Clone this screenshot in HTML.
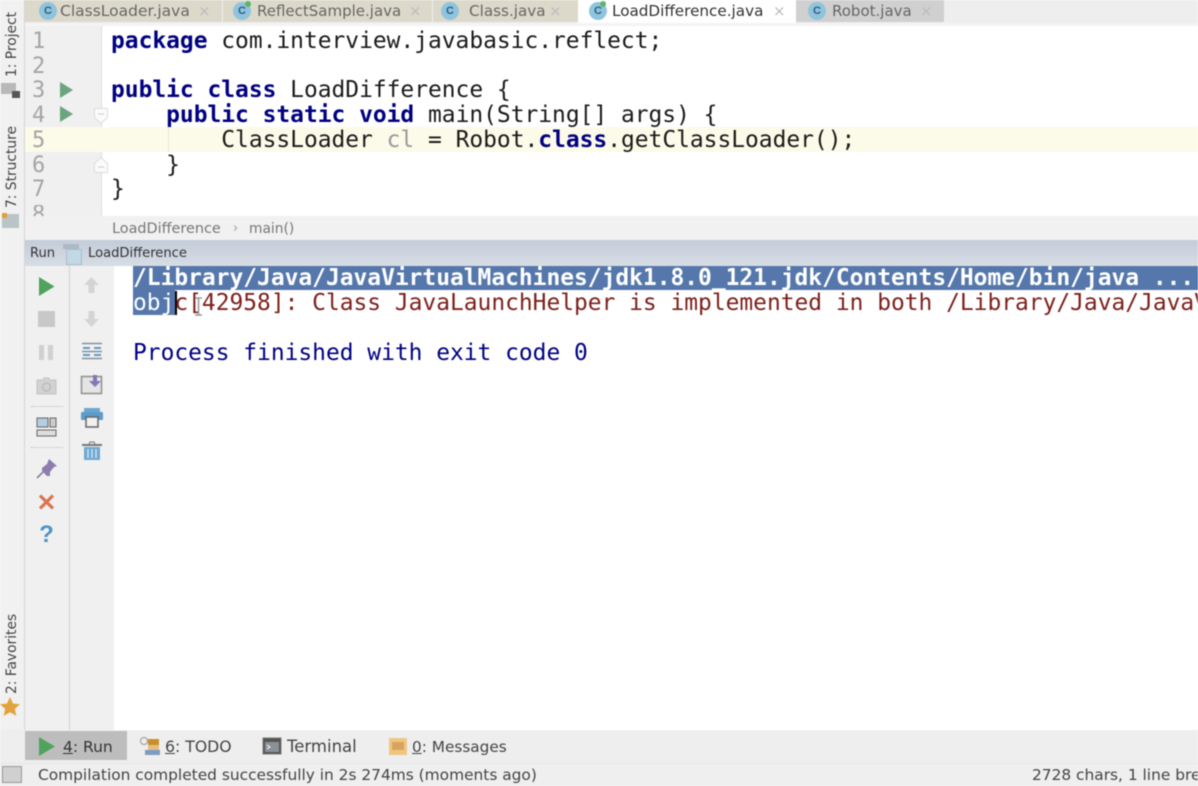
<!DOCTYPE html>
<html><head><meta charset="utf-8">
<style>
html,body{margin:0;padding:0;background:#fff}
#r{position:relative;width:1198px;height:786px;overflow:hidden;background:#fff;font-family:"DejaVu Sans",sans-serif;filter:blur(.6px)}
.a{position:absolute}
.m{position:absolute;font-family:"DejaVu Sans Mono",monospace;font-size:22.9px;line-height:25px;white-space:pre;color:#1a1a1a}
.k{color:#000080;font-weight:bold}
.n{position:absolute;left:32px;font-family:"DejaVu Sans Mono",monospace;font-size:22px;line-height:25px;color:#a4a4a4}
.t{position:absolute;top:1px;height:22px;line-height:21px;font-size:15.2px;color:#666;white-space:nowrap}
.x{position:absolute;top:0;font-size:15px;line-height:22px;color:#bbb}
.c{position:absolute;top:2px;width:18px;height:18px;border-radius:50%;background:#8fc4dc;color:#2f5f80;font:bold 11px/18px "Liberation Sans",sans-serif;text-align:center}
.g{position:absolute;top:1px;width:6px;height:6px;background:#5fb36a;border-radius:50%}
.v{position:absolute;transform:rotate(-90deg);transform-origin:0 0;font-size:13.8px;line-height:18px;color:#444;white-space:nowrap}
.b{position:absolute;font-size:15.500px;line-height:20px;color:#444;white-space:nowrap}
u{text-decoration:underline}
svg{position:absolute;overflow:visible}
</style></head><body><div id="r">

<!-- left stripe -->
<div class="a" style="left:0;top:0;width:24px;height:730px;background:#f1f1f1;border-right:1px solid #d4d4d4"></div>
<div class="v" style="left:3px;top:77px">1: Project</div>
<div class="a" style="left:1px;top:83px;width:15px;height:11px;background:#b8b8b8"></div>
<div class="a" style="left:12px;top:91px;width:8px;height:7px;background:#555"></div>
<div class="v" style="left:3px;top:208px">7: Structure</div>
<div class="a" style="left:2px;top:214px;width:17px;height:14px;background:#b8c4c8"></div>
<div class="a" style="left:2px;top:213px;width:5px;height:5px;background:#e0a030"></div>
<div class="v" style="left:3px;top:694px">2: Favorites</div>
<svg style="left:0;top:697px" width="21" height="21" viewBox="0 0 21 21"><path d="M10 0l3 6.500 7 .8-5.200 4.600 1.500 7L10 15.300l-6.300 3.600 1.500-7L0 7.300l7-.8z" fill="#e3a33c"/></svg>

<!-- tab bar -->
<div class="a" style="left:25px;top:0;width:1173px;height:23px;background:#eeeeee"></div>
<div class="a" style="left:25px;top:0;width:553px;height:22px;background:#dcd9cb"></div>
<div class="a" style="left:578px;top:0;width:218px;height:23px;background:#fff"></div>
<div class="a" style="left:796px;top:0;width:148px;height:22px;background:#d0d0d0"></div>
<div class="a" style="left:25px;top:23px;width:1173px;height:3px;background:#f4f4f4"></div>
<div class="a" style="left:222px;top:0;width:1px;height:22px;background:#eee"></div>
<div class="a" style="left:432px;top:0;width:1px;height:22px;background:#eee"></div>

<div class="c" style="left:39px">C</div><div class="t" style="left:60px;font-size:15.5px">ClassLoader.java</div><div class="x" style="left:198px">×</div>
<div class="c" style="left:233px">C</div><div class="g" style="left:245px"></div><div class="t" style="left:257px;font-size:15px">ReflectSample.java</div><div class="x" style="left:409px">×</div>
<div class="c" style="left:441px">C</div><div class="t" style="left:469px">Class.java</div><div class="x" style="left:549px">×</div>
<div class="c" style="left:589px">C</div><div class="g" style="left:600px"></div><div class="t" style="left:612px;color:#333">LoadDifference.java</div><div class="x" style="left:773px">×</div>
<div class="c" style="left:808px">C</div><div class="t" style="left:832px;font-size:15px">Robot.java</div><div class="x" style="left:920px">×</div>

<!-- editor -->
<div class="a" style="left:25px;top:26px;width:76px;height:190px;background:#f0f0f0;border-right:1px solid #dcdcdc"></div>
<div class="a" style="left:25px;top:127px;width:1173px;height:25px;background:#fcfae9"></div>
<div class="a" style="left:168px;top:127px;width:1px;height:25px;background:#e8e8e0"></div>

<div class="n" style="top:29px">1</div>
<div class="n" style="top:54px">2</div>
<div class="n" style="top:78px">3</div>
<div class="n" style="top:103px">4</div>
<div class="n" style="top:128px">5</div>
<div class="n" style="top:153px">6</div>
<div class="n" style="top:177px">7</div>
<div class="a" style="left:25px;top:205px;width:76px;height:11px;overflow:hidden"><div class="n" style="left:7px;top:-3px">8</div></div>

<svg style="left:60px;top:82px" width="14" height="16"><path d="M0 0L13 8L0 16z" fill="#6aa57f"/></svg>
<svg style="left:60px;top:106px" width="14" height="16"><path d="M0 0L13 8L0 16z" fill="#6aa57f"/></svg>
<svg style="left:94px;top:108px" width="14" height="17"><path d="M.5.500h13v9L7 15.500.5 9.500z" fill="#fafafa" stroke="#ddd"/><path d="M4 6h6" stroke="#ccc"/></svg>
<svg style="left:94px;top:157px" width="14" height="16"><path d="M.5 15.500h13v-9L7 .5.500 6.500z" fill="#fafafa" stroke="#ddd"/><path d="M4 10h6" stroke="#ccc"/></svg>

<div class="m" style="left:111px;top:29px"><span class="k">package</span> com.interview.javabasic.reflect;</div>
<div class="m" style="left:111px;top:78px"><span class="k">public class</span> LoadDifference {</div>
<div class="m" style="left:111px;top:103px">    <span class="k">public static void</span> main(String[] args) {</div>
<div class="m" style="left:111px;top:128px">        ClassLoader <span style="color:#9a9a9a">cl</span> = Robot.<span class="k">class</span>.getClassLoader();</div>
<div class="m" style="left:111px;top:153px">    }</div>
<div class="m" style="left:111px;top:177px">}</div>

<!-- breadcrumb -->
<div class="a" style="left:25px;top:216px;width:1173px;height:24px;background:#f1f1f1"></div>
<div class="b" style="left:112px;top:219px;font-size:14.4px;color:#777">LoadDifference</div>
<div class="b" style="left:233px;top:219px;font-size:13px;color:#999">›</div>
<div class="b" style="left:249px;top:219px;font-size:13.8px;color:#777">main()</div>

<!-- run header -->
<div class="a" style="left:25px;top:240px;width:1173px;height:26px;background:linear-gradient(#c3ccd9,#d8dde4)"></div>
<div class="b" style="left:30px;top:244px;font-size:13.1px;color:#333">Run</div>
<div class="a" style="left:63px;top:244px;width:16px;height:5px;background:#aeb9c6"></div>
<div class="a" style="left:66px;top:249px;width:16px;height:16px;background:#c2d8e6;border:1px solid #a9bccb;box-sizing:border-box"></div>
<div class="b" style="left:88px;top:244px;font-size:13.1px;color:#333">LoadDifference</div>

<!-- run toolbars -->
<div class="a" style="left:25px;top:266px;width:44px;height:464px;background:#f0f0f0;border-right:1px solid #cfcfcf"></div>
<div class="a" style="left:70px;top:266px;width:44px;height:464px;background:#f0f0f0"></div>

<svg style="left:39px;top:277px" width="16" height="19"><path d="M0 0L15.500 9.500L0 19z" fill="#4fa35c"/></svg>
<div class="a" style="left:38px;top:311px;width:17px;height:16px;background:#c8c8c8"></div>
<div class="a" style="left:39px;top:345px;width:5px;height:15px;background:#d0d0d0"></div>
<div class="a" style="left:48px;top:345px;width:5px;height:15px;background:#d0d0d0"></div>
<svg style="left:36px;top:377px" width="21" height="18"><path d="M1 3h6l1-2h5l1 2h6v14H1z" fill="#d2d2d2" stroke="#c4c4c4"/><circle cx="10.500" cy="10" r="4" fill="none" stroke="#bdbdbd" stroke-width="1.500"/></svg>
<div class="a" style="left:31px;top:406px;width:32px;height:1px;border-top:1px dotted #bbb"></div>
<svg style="left:36px;top:417px" width="22" height="20"><rect x="1" y="1" width="11" height="9" fill="#b4cde0" stroke="#666"/><rect x="14" y="1" width="6" height="9" fill="#ccc" stroke="#666"/><rect x="1" y="13" width="19" height="6" fill="#ddd" stroke="#666"/></svg>
<div class="a" style="left:31px;top:447px;width:32px;height:1px;border-top:1px dotted #bbb"></div>
<svg style="left:36px;top:459px" width="21" height="20"><path d="M13 0l8 7-3 1-4 5 0 4-3 0-5-5 0-3 5-4z" fill="#8d7cad"/><path d="M7 13L1 19" stroke="#777" stroke-width="1.500"/></svg>
<svg style="left:38px;top:494px" width="17" height="16"><path d="M2 1.500L15 14.500M15 1.500L2 14.500" stroke="#dc7550" stroke-width="3.200"/></svg>
<div class="a" style="left:38px;top:522px;width:17px;text-align:center;font:bold 24px/26px 'Liberation Sans',sans-serif;color:#4e93c4">?</div>

<svg style="left:83px;top:277px" width="17" height="17"><path d="M8.500 0L16 8h-4.500v8h-6V8H1z" fill="#d4d4d4"/></svg>
<svg style="left:83px;top:310px" width="17" height="17"><path d="M8.500 17L16 9h-4.500V1h-6v8H1z" fill="#d4d4d4"/></svg>
<svg style="left:81px;top:342px" width="22" height="19"><path d="M1 1.500h20M1 9.500h20M1 16.500h20" stroke="#8a8f94" stroke-width="1.500"/><path d="M2 6h18M2 13h18" stroke="#5a9bc9" stroke-width="2" stroke-dasharray="7 4"/></svg>
<svg style="left:81px;top:375px" width="21" height="19"><rect x=".5" y="1.500" width="20" height="17" fill="#e4e4e4" stroke="#8f8f8f" stroke-width="1.500"/><path d="M12 0h4v6h4l-6 6-6-6h4z" fill="#8875b5"/></svg>
<svg style="left:81px;top:408px" width="22" height="20"><rect x="3" y="0" width="16" height="5" fill="#6aa6cf"/><rect x="0" y="4" width="22" height="8" rx="1" fill="#5b9ccb"/><rect x="5" y="9" width="12" height="10" fill="#f0f0f0" stroke="#666" stroke-width="1.500"/></svg>
<svg style="left:82px;top:441px" width="20" height="20"><path d="M0 4h20" stroke="#777" stroke-width="2"/><path d="M7 3l1-2h4l1 2" fill="none" stroke="#777"/><path d="M2 6h16v13H2z" fill="#6ea9d2"/><path d="M6 8v9M10 8v9M14 8v9" stroke="#d7e8f3" stroke-width="1.300"/></svg>

<!-- console -->
<div class="a" style="left:133px;top:266px;width:1065px;height:24px;background:#5577ab"></div>
<div class="a" style="left:133px;top:290px;width:42px;height:25px;background:#5577ab"></div>
<div class="a" style="left:175px;top:291px;width:2px;height:24px;background:#000"></div>
<div class="m" style="left:133px;top:266px;color:#fff;font-weight:bold">/Library/Java/JavaVirtualMachines/jdk1.8.0_121.jdk/Contents/Home/bin/java ...</div>
<div class="m" style="left:133px;top:291px;color:#7c211c"><span style="color:#fff">obj</span>c[42958]: Class JavaLaunchHelper is implemented in both /Library/Java/JavaV</div>
<div class="m" style="left:133px;top:341px;color:#000080">Process finished with exit code 0</div>
<svg style="left:194px;top:297px" width="9" height="20"><path d="M1 1h7M4.500 1v17M1 18h7" stroke="#999" stroke-width="1.500" fill="none"/></svg>

<!-- bottom bar -->
<div class="a" style="left:0;top:730px;width:1198px;height:33px;background:#eeeeee"></div>
<div class="a" style="left:25px;top:731px;width:102px;height:29px;background:#bdbdbd"></div>
<svg style="left:39px;top:737px" width="17" height="19"><path d="M0 0L16 9.500L0 19z" fill="#4fa35c"/></svg>
<div class="b" style="left:63px;top:737px;color:#333"><u>4</u>: Run</div>
<svg style="left:139px;top:737px" width="22" height="19"><circle cx="5" cy="4" r="3.500" fill="#eee" stroke="#999"/><rect x="9" y="2" width="11" height="6" fill="#c98f2b"/><rect x="9" y="8" width="11" height="5" fill="#e5bd85"/><rect x="6" y="13" width="15" height="5" fill="#7c9cc0"/></svg>
<div class="b" style="left:165px;top:737px;font-size:15.7px"><u>6</u>: TODO</div>
<svg style="left:262px;top:737px" width="20" height="18"><rect x="1" y="1" width="18" height="16" fill="#555" stroke="#777"/><rect x="3" y="5" width="14" height="10" fill="#8a9096"/><path d="M5 8l3 2-3 2" fill="none" stroke="#fff"/></svg>
<div class="b" style="left:287px;top:737px;font-size:16.500px">Terminal</div>
<svg style="left:389px;top:738px" width="18" height="17"><rect width="18" height="17" fill="#efc583"/><rect x="3" y="4" width="12" height="8" fill="#d8a45c"/></svg>
<div class="b" style="left:412px;top:737px;font-size:15.3px"><u>0</u>: Messages</div>

<div class="a" style="left:0;top:763px;width:1198px;height:23px;background:#efefef;border-top:1px solid #e6e6e6;box-sizing:border-box"></div>
<div class="a" style="left:2px;top:766px;width:20px;height:17px;background:#d0d0d0;border:1px solid #999;box-sizing:border-box"></div>
<div class="b" style="left:38px;top:765px;font-size:15.4px;color:#444">Compilation completed successfully in 2s 274ms (moments ago)</div>
<div class="b" style="left:1032px;top:765px;font-size:15.4px;color:#444">2728 chars, 1 line bre</div>
</div></body></html>
